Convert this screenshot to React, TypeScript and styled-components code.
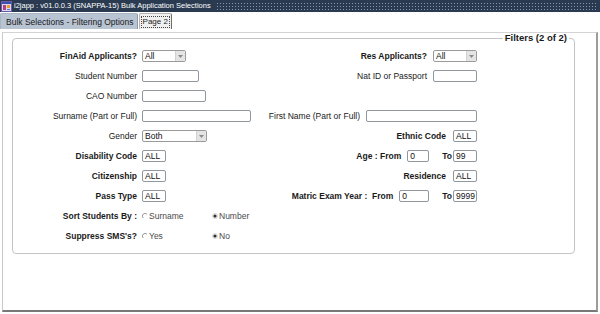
import styled, { createGlobalStyle } from "styled-components";

const colors = {
  titleBar: '#2a3a50',
  tabIdle: '#b8c4d2',
  tabActive: '#f0f0f0',
  frame: '#c4c4c4',
  fieldBorder: '#8f979f',
  text: '#1a1a1a',
  radioText: '#4a4a4a',
};

const GlobalStyle = createGlobalStyle`
  html, body {
    margin: 0;
    padding: 0;
    background: #fff;
  }
  body {
    font-family: "Liberation Sans", Arial, sans-serif;
    font-size: 8.5px;
    color: ${colors.text};
  }
  #root {
    width: 600px;
    height: 314px;
    overflow: hidden;
  }
`;

const Window = styled.div`
  width: 600px;
  height: 314px;
  display: flex;
  flex-direction: column;
  background: #fff;
`;

const TitleBar = styled.div`
  height: 12px;
  flex: none;
  display: flex;
  align-items: center;
  background: ${colors.titleBar};
  color: #fff;
`;

const TitleIcon = styled.svg`
  flex: none;
  margin: 0 2px 0 1px;
`;

const TitleText = styled.span`
  white-space: nowrap;
  font-size: 7.5px;
  line-height: 12px;
  padding-right: 5px;
`;

const TitleTexture = styled.div`
  flex: 1;
  align-self: stretch;
  margin: 2px 2px 2px 0;
  background-image: radial-gradient(circle, rgba(200, 214, 232, 0.6) 0.6px, transparent 0.9px);
  background-size: 3px 3px;
`;

const TabStrip = styled.div`
  display: flex;
  align-items: flex-end;
  gap: 1px;
  margin-top: 1px;
  height: 16px;
  flex: none;
`;

const Tab = styled.div<{ $active?: boolean }>`
  height: 16px;
  box-sizing: border-box;
  display: flex;
  align-items: center;
  padding: ${p => (p.$active ? '0 2px' : '0 3px 0 5px')};
  background: ${p => (p.$active ? colors.tabActive : colors.tabIdle)};
  border: 1px solid ${p => (p.$active ? '#b4b4b4' : '#a8b5c3')};
  border-right-color: ${p => (p.$active ? '#6e6e6e' : '#8c98a7')};
  border-bottom: none;
  border-radius: 2px 2px 0 0;
  white-space: nowrap;
`;

const FocusText = styled.span`
  outline: 1px dotted #444;
  padding: 0 1px;
  font-size: 8px;
  line-height: 10px;
`;

const Panel = styled.div`
  margin: 3px 2px 0 2px;
  height: 280px;
  flex: none;
  box-sizing: border-box;
  border-left: 1px solid #c9c9c9;
  border-top: 1px solid #d4d4d4;
  border-right: 2px solid #9c9c9c;
  border-bottom: 2px solid #787878;
  padding: 0 21px 0 9px;
`;

const Filters = styled.fieldset`
  margin: 0;
  padding: 3px 0 7px 0;
  border: 1px solid ${colors.frame};
  border-radius: 4px;
  min-width: 0;
`;

const Legend = styled.legend`
  margin-left: auto;
  margin-right: 5px;
  padding: 0 2px;
  font-size: 9.5px;
  font-weight: bold;
  line-height: 10px;
`;

const FilterBody = styled.div`
  padding-right: 97px;
`;

const Row = styled.div`
  display: flex;
  align-items: center;
  height: 20px;
`;

const LeftGroup = styled.div`
  display: flex;
  align-items: center;
  gap: 5px;
`;

const RightGroup = styled.div<{ $gap?: number }>`
  margin-left: auto;
  display: flex;
  align-items: center;
  gap: ${p => p.$gap ?? 6}px;
`;

const Label = styled.span<{ $bold?: boolean }>`
  font-weight: ${p => (p.$bold ? 'bold' : 'normal')};
  white-space: pre;
  line-height: 10px;
`;

const LeftLabel = styled(Label)`
  width: 124px;
  flex: none;
  text-align: right;
`;

const RangeEnd = styled.div`
  display: flex;
  align-items: center;
  gap: 1px;
  margin-left: 7px;
`;

const TextBox = styled.span<{ $w: number }>`
  box-sizing: border-box;
  width: ${p => p.$w}px;
  height: 12px;
  flex: none;
  display: inline-flex;
  align-items: center;
  padding-left: 2px;
  border: 1px solid ${colors.fieldBorder};
  border-radius: 2px;
  background: #fff;
  line-height: 10px;
  color: #111;
  overflow: hidden;
  white-space: nowrap;
`;

const SelectBox = styled(TextBox)`
  justify-content: space-between;
  border-color: #9a9a9a;
`;

const DropButton = styled.span`
  width: 9px;
  height: 10px;
  display: flex;
  align-items: center;
  justify-content: center;
  background: #e4e4e4;
  border-left: 1px solid #d2d2d2;
`;

const RadioGroup = styled.div`
  display: flex;
`;

const RadioOption = styled.span`
  width: 70px;
  display: flex;
  align-items: center;
  gap: 1px;
  color: ${colors.radioText};
  line-height: 10px;
`;

const Select = ({ value, width }: { value: string; width: number }) => (
  <SelectBox $w={width}>
    {value}
    <DropButton>
      <svg width="5" height="3" viewBox="0 0 5 3">
        <path d="M0 0h5L2.5 3z" fill="#8a8a8a" />
      </svg>
    </DropButton>
  </SelectBox>
);

const Radio = ({ label, checked }: { label: string; checked?: boolean }) => (
  <RadioOption>
    <svg width="6" height="6" viewBox="0 0 6 6">
      {checked ? (
        <>
          <circle cx="3" cy="3" r="2.6" fill="#f4f4f4" stroke="#c8c8c8" strokeWidth="0.6" />
          <circle cx="3" cy="3" r="1.6" fill="#333" />
        </>
      ) : (
        <path d="M1.2 5A2.6 2.6 0 0 1 5 1.2" fill="none" stroke="#8a8a8a" strokeWidth="0.9" />
      )}
    </svg>
    {label}
  </RadioOption>
);

const App = () => {
  return (
    <>
      <GlobalStyle />
      <Window>
        <TitleBar>
          <TitleIcon width="11" height="11" viewBox="0 0 11 11">
            <rect x="0.5" y="0.5" width="10" height="10" fill="#dcd6f0" stroke="#6b5aa6" />
            <rect x="1" y="1" width="9" height="2" fill="#3a4fb2" />
            <rect x="2" y="4" width="3" height="5" fill="#b4408a" />
            <rect x="6" y="4" width="3" height="3" fill="#e3a228" />
            <rect x="6" y="8" width="3" height="1" fill="#4a7fd0" />
          </TitleIcon>
          <TitleText>i2japp : v01.0.0.3 (SNAPPA-15) Bulk Application Selections</TitleText>
          <TitleTexture />
        </TitleBar>

        <TabStrip>
          <Tab>Bulk Selections - Filtering Options</Tab>
          <Tab $active>
            <FocusText>Page 2</FocusText>
          </Tab>
        </TabStrip>

        <Panel>
          <Filters>
            <Legend>Filters (2 of 2)</Legend>
            <FilterBody>
              <Row>
                <LeftGroup>
                  <LeftLabel $bold>FinAid Applicants?</LeftLabel>
                  <Select value="All" width={44} />
                </LeftGroup>
                <RightGroup $gap={6}>
                  <Label $bold>Res Applicants?</Label>
                  <Select value="All" width={44} />
                </RightGroup>
              </Row>

              <Row>
                <LeftGroup>
                  <LeftLabel>Student Number</LeftLabel>
                  <TextBox $w={57} />
                </LeftGroup>
                <RightGroup $gap={6}>
                  <Label>Nat ID or Passport</Label>
                  <TextBox $w={44} />
                </RightGroup>
              </Row>

              <Row>
                <LeftGroup>
                  <LeftLabel>CAO Number</LeftLabel>
                  <TextBox $w={64} />
                </LeftGroup>
              </Row>

              <Row>
                <LeftGroup>
                  <LeftLabel>Surname (Part or Full)</LeftLabel>
                  <TextBox $w={109} />
                </LeftGroup>
                <RightGroup $gap={6}>
                  <Label>First Name (Part or Full)</Label>
                  <TextBox $w={111} />
                </RightGroup>
              </Row>

              <Row>
                <LeftGroup>
                  <LeftLabel>Gender</LeftLabel>
                  <Select value="Both" width={65} />
                </LeftGroup>
                <RightGroup $gap={7}>
                  <Label $bold>Ethnic Code</Label>
                  <TextBox $w={24}>ALL</TextBox>
                </RightGroup>
              </Row>

              <Row>
                <LeftGroup>
                  <LeftLabel $bold>Disability Code</LeftLabel>
                  <TextBox $w={24}>ALL</TextBox>
                </LeftGroup>
                <RightGroup $gap={6}>
                  <Label $bold>Age : From</Label>
                  <TextBox $w={22}>0</TextBox>
                  <RangeEnd>
                    <Label $bold>To</Label>
                    <TextBox $w={24}>99</TextBox>
                  </RangeEnd>
                </RightGroup>
              </Row>

              <Row>
                <LeftGroup>
                  <LeftLabel $bold>Citizenship</LeftLabel>
                  <TextBox $w={24}>ALL</TextBox>
                </LeftGroup>
                <RightGroup $gap={7}>
                  <Label $bold>Residence</Label>
                  <TextBox $w={24}>ALL</TextBox>
                </RightGroup>
              </Row>

              <Row>
                <LeftGroup>
                  <LeftLabel $bold>Pass Type</LeftLabel>
                  <TextBox $w={24}>ALL</TextBox>
                </LeftGroup>
                <RightGroup $gap={6}>
                  <Label $bold>{'Matric Exam Year :  From'}</Label>
                  <TextBox $w={30}>0</TextBox>
                  <RangeEnd>
                    <Label $bold>To</Label>
                    <TextBox $w={24}>9999</TextBox>
                  </RangeEnd>
                </RightGroup>
              </Row>

              <Row>
                <LeftGroup>
                  <LeftLabel $bold>Sort Students By :</LeftLabel>
                  <RadioGroup>
                    <Radio label="Surname" />
                    <Radio label="Number" checked />
                  </RadioGroup>
                </LeftGroup>
              </Row>

              <Row>
                <LeftGroup>
                  <LeftLabel $bold>Suppress SMS's?</LeftLabel>
                  <RadioGroup>
                    <Radio label="Yes" />
                    <Radio label="No" checked />
                  </RadioGroup>
                </LeftGroup>
              </Row>
            </FilterBody>
          </Filters>
        </Panel>
      </Window>
    </>
  );
};

export default App;
